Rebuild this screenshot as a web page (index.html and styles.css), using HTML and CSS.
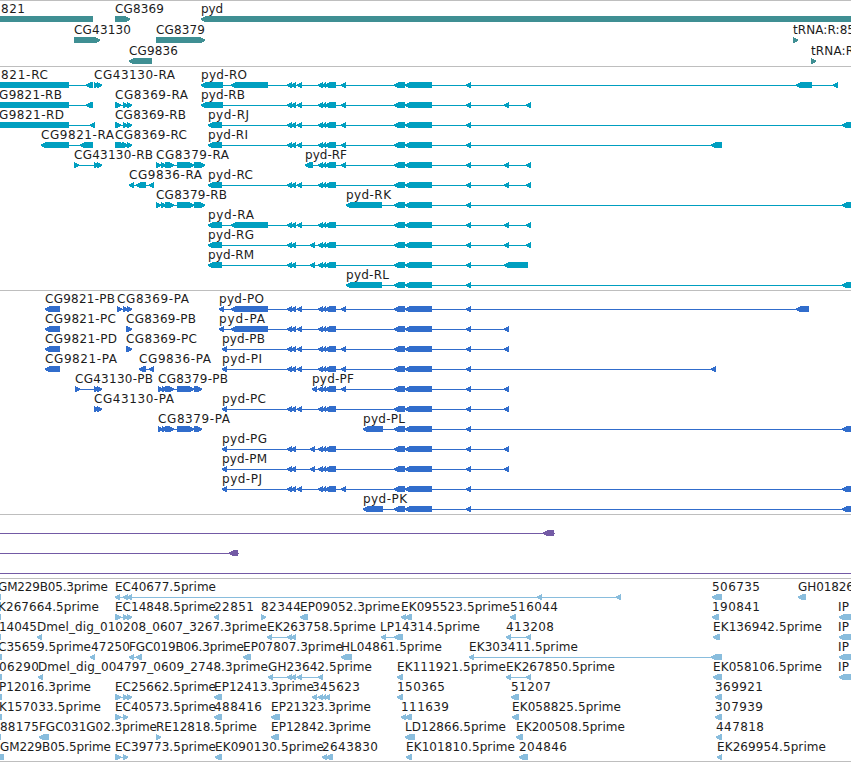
FILE: index.html
```html
<!DOCTYPE html>
<html lang="en">
<head>
<meta charset="utf-8">
<title>Genome browser</title>
<link rel="stylesheet" href="styles.css">
</head>
<body>
<main class="browser" id="browser"></main>
<script src="tracks.js"></script>
</body>
</html>
```
FILE: styles.css
```css
body {
  margin: 0;
  background: #fff;
}

.browser {
  display: flex;
  flex-direction: column;
  width: 851px;
  height: 762px;
  overflow: hidden;
  border-bottom: 1px solid #bebebe;
  box-sizing: border-box;
}

.track {
  display: flex;
  flex-direction: column;
  flex: none;
  box-sizing: border-box;
  border-top: 1px solid #bebebe;
}

.gene { height: 66px; color: #3f8f93; }
.transcript { height: 224px; color: #009fc0; }
.protein { height: 224px; color: #316dcc; }
.insertion { height: 64px; color: #735aa5; }
.est { height: 183px; color: #89bddd; }

.row {
  display: block;
  flex: none;
  width: 851px;
  height: 20px;
  overflow: visible;
}

.gene .row { height: 21px; }

.row path,
.row rect {
  fill: currentColor;
  shape-rendering: crispEdges;
}

.row text {
  fill: #1c1c1c;
  font-family: "DejaVu Sans", sans-serif;
  font-size: 12px;
}
```
FILE: tracks.js
```js
// Label: [text, first pixel, last pixel].
// Feature: [direction, [start, end], ...], blocks are joined by a thin line.
const L = '<', R = '>';
const mid = [[287, 292], [291, 296]];
const c3 = [297, 302], alt = [310, 315];
const cluster = [[318, 323], [322, 326], [325, 336]];
const e = [341, 346];
const core = [[394, 405], [405, 432], [466, 471]];
const h = [504, 509], i = [526, 531], edge = [842, 870];
const big = [231, 268];
const pyd = (start, extra, tail) => [L, ...start, ...mid, ...extra, ...cluster, ...tail];
const r8379 = [R, [156, 161], [161, 166], [165, 174], [177, 194], [194, 205]];
const p8379 = [R, [158, 163], [162, 167], [165, 174], [177, 194], [194, 202]];
const r8369 = [R, [115, 121], [123, 128], [127, 132]];
const pair = [[94, 99], [97, 102]];

const tracks = [
  { name: 'gene', rows: [
    { t: [['821', 1, 25], ['CG8369', 115, 164], ['pyd', 201, 223]],
      f: [['=', [-5, 93]], [R, [115, 130]], [L, [201, 870]]] },
    { t: [['CG43130', 74, 131], ['CG8379', 156, 205], ['tRNA:R:85', 793, 855]],
      f: [[R, [74, 100]], [R, [156, 205]], [R, [793, 798]]] },
    { t: [['CG9836', 129, 178], ['tRNA:R', 811, 854]],
      f: [[L, [129, 152]], [R, [811, 816]]] }
  ] },
  { name: 'transcript', rows: [
    { t: [['821-RC', 1, 48], ['CG43130-RA', 94, 175], ['pyd-RO', 201, 247]],
      f: [['=', [-5, 69]], [L, [68, 69], [86, 93]], [R, ...pair],
        pyd([[201, 223], big], [c3], [e, ...core, [796, 812], [833, 838]])] },
    { t: [['G9821-RB', -1, 62], ['CG8369-RA', 115, 188], ['pyd-RB', 201, 245]],
      f: [['=', [-5, 69]], [L, [68, 69], [86, 93]], r8369, pyd([[201, 223]], [c3], [e, ...core, h, i])] },
    { t: [['G9821-RD', -1, 64], ['CG8369-RB', 115, 186], ['pyd-RJ', 208, 249]],
      f: [['=', [-5, 69]], [L, [68, 69], [90, 95]], r8369, pyd([[208, 222]], [c3], [e, ...core, edge])] },
    { t: [['CG9821-RA', 41, 114], ['CG8369-RC', 115, 187], ['pyd-RI', 208, 248]],
      f: [[L, [41, 69], [80, 93]], [R, [115, 125], [122, 128], [127, 132]],
        pyd([[208, 222]], [c3], [e, ...core, [711, 722]])] },
    { t: [['CG43130-RB', 74, 153], ['CG8379-RA', 156, 229], ['pyd-RF', 305, 347]],
      f: [[R, [74, 79], ...pair], r8379, [L, [305, 313], ...cluster, e, ...core, h, i]] },
    { t: [['CG9836-RA', 129, 202], ['pyd-RC', 208, 253]],
      f: [[L, [129, 134], [136, 146], [149, 154]], pyd([[208, 222]], [c3], [...core, h, i])] },
    { t: [['CG8379-RB', 156, 227], ['pyd-RK', 346, 391]],
      f: [r8379, [L, [346, 382], ...core, edge]] },
    { t: [['pyd-RA', 208, 254]], f: [pyd([[208, 222], big], [c3], [...core, h, i])] },
    { t: [['pyd-RG', 208, 254]], f: [pyd([[208, 222]], [alt], [...core, h, i])] },
    { t: [['pyd-RM', 208, 254]], f: [pyd([[208, 222]], [alt], [...core, [504, 528]])] },
    { t: [['pyd-RL', 346, 389]], f: [[L, [346, 382], ...core, edge]] }
  ] },
  { name: 'protein', rows: [
    { t: [['CG9821-PB', 45, 115], ['CG8369-PA', 117, 189], ['pyd-PO', 219, 264]],
      f: [[L, [45, 60]], [R, [117, 122], [123, 128], [127, 132]],
        pyd([[219, 224], big], [c3], [e, ...core, [796, 809]])] },
    { t: [['CG9821-PC', 45, 116], ['CG8369-PB', 126, 196], ['pyd-PA', 219, 265]],
      f: [[L, [45, 60]], [R, [126, 132]], pyd([[219, 224], big], [c3], [...core, h])] },
    { t: [['CG9821-PD', 45, 117], ['CG8369-PC', 126, 197], ['pyd-PB', 222, 265]],
      f: [[L, [45, 60]], [R, [126, 132]], pyd([[222, 227]], [c3], [e, ...core, h])] },
    { t: [['CG9821-PA', 45, 117], ['CG9836-PA', 139, 211], ['pyd-PI', 222, 262]],
      f: [[L, [45, 60]], [L, [139, 146], [149, 154]], pyd([[222, 227]], [c3], [e, ...core, [711, 716]])] },
    { t: [['CG43130-PB', 75, 153], ['CG8379-PB', 158, 228], ['pyd-PF', 312, 354]],
      f: [[R, [75, 80], ...pair], p8379, [L, [312, 317], ...cluster, e, ...core, h]] },
    { t: [['CG43130-PA', 94, 174], ['pyd-PC', 222, 266]],
      f: [[R, ...pair], pyd([[222, 227]], [c3], [...core, h])] },
    { t: [['CG8379-PA', 158, 230], ['pyd-PL', 363, 405]],
      f: [p8379, [L, [363, 383], ...core, edge]] },
    { t: [['pyd-PG', 222, 267]], f: [pyd([[222, 227]], [alt], [...core, h])] },
    { t: [['pyd-PM', 222, 267]], f: [pyd([[222, 227]], [alt], [...core, h])] },
    { t: [['pyd-PJ', 222, 262]], f: [pyd([[222, 227]], [c3], [e, ...core, edge])] },
    { t: [['pyd-PK', 363, 407]], f: [[L, [363, 383], ...core, edge]] }
  ] },
  { name: 'insertion', rows: [
    { t: [], f: [['-', [-5, 555]], [L, [543, 554]]] },
    { t: [], f: [['-', [-5, 239]], [L, [229, 238]]] },
    { t: [], f: [['-', [-5, 860]]] }
  ] },
  { name: 'est', rows: [
    { t: [['GM229B05.3prime', -2, 108], ['EC40677.5prime', 115, 216], ['506735', 712, 760], ['GH01826', 798, 854]],
      f: [['=', [-5, 1]], [L, [115, 120], [123, 128], [127, 132], [537, 542], [616, 621]],
        [L, [712, 722]], [L, [798, 806]]] },
    { t: [['K267664.5prime', -2, 99], ['EC14848.5prime', 115, 216], ['22851', 214, 254], ['82344', 261, 301],
        ['EP09052.3prime', 300, 400], ['EK095523.5prime', 401, 510], ['516044', 510, 558], ['190841', 712, 760], ['IP', 838, 849]],
      f: [['=', [-5, 1]], r8369, [L, [214, 219]], [R, [261, 266]], [L, [300, 308]],
        [L, [401, 406], [405, 412]], [L, [510, 516]], [L, [712, 719]], [L, [839, 870]]] },
    { t: [['14045', -1, 37], ['Dmel_dig_010208_0607_3267.3prime', 37, 267], ['EK263758.5prime', 267, 376],
        ['LP14314.5prime', 380, 480], ['413208', 506, 554], ['EK136942.5prime', 713, 822], ['IP', 838, 849]],
      f: [['=', [-5, 1]], [L, [37, 42]], [L, [267, 272], [287, 292], [291, 296]], [L, [381, 386], [394, 403]],
        [L, [506, 511], [526, 531]], [L, [713, 720]], [L, [839, 870]]] },
    { t: [['C35659.5prime', -2, 91], ['47250', 91, 130], ['FGC019B06.3prime', 129, 244], ['EP07807.3prime', 243, 343],
        ['HL04861.5prime', 341, 442], ['EK303411.5prime', 469, 578], ['IP', 838, 849]],
      f: [['=', [-5, 2]], [L, [90, 95]], [L, [129, 134], [136, 142]], [L, [243, 251]], [L, [341, 352]],
        [L, [469, 474], [711, 722]], [L, [839, 870]]] },
    { t: [['06290', -1, 39], ['Dmel_dig_004797_0609_2748.3prime', 38, 268], ['GH23642.5prime', 268, 372],
        ['EK111921.5prime', 397, 506], ['EK267850.5prime', 506, 615], ['EK058106.5prime', 713, 822], ['IP', 838, 849]],
      f: [['=', [-5, 2]], [L, [38, 43]], [L, [268, 273], [287, 292], [291, 296], [297, 302], [318, 323]],
        [L, [397, 403]], [L, [506, 511], [526, 531]], [L, [713, 722]], [L, [839, 870]]] },
    { t: [['P12016.3prime', -1, 91], ['EC25662.5prime', 115, 216], ['EP12413.3prime', 214, 314], ['345623', 312, 360],
        ['150365', 397, 445], ['51207', 511, 551], ['369921', 715, 763]],
      f: [['=', [-5, 2]], r8369, [L, [214, 222]], [L, [312, 317], [318, 323], [322, 326], [325, 330]],
        [L, [397, 403]], [L, [511, 519]], [L, [715, 722]]] },
    { t: [['K157033.5prime', -1, 101], ['EC40573.5prime', 115, 216], ['488416', 214, 262], ['EP21323.3prime', 271, 371],
        ['111639', 401, 449], ['EK058825.5prime', 512, 621], ['307939', 715, 763]],
      f: [['=', [-5, 2]], [R, [115, 121], [123, 128]], [L, [214, 222]], [L, [271, 280]],
        [L, [401, 406], [405, 412]], [L, [512, 519]], [L, [715, 722]]] },
    { t: [['88175', 0, 39], ['FGC031G02.3prime', 39, 157], ['RE12818.5prime', 156, 257], ['EP12842.3prime', 271, 371],
        ['LD12866.5prime', 405, 506], ['EK200508.5prime', 516, 625], ['447818', 716, 764]],
      f: [['=', [-5, 1]], [L, [39, 49]], [R, [156, 161]], [L, [271, 279]], [L, [405, 415]],
        [L, [516, 523]], [L, [716, 722]]] },
    { t: [['GM229B05.5prime', 0, 111], ['EC39773.5prime', 115, 216], ['EK090130.5prime', 215, 324], ['2643830', 322, 378],
        ['EK101810.5prime', 406, 515], ['204846', 519, 567], ['EK269954.5prime', 717, 826]],
      f: [['=', [-5, 4]], [R, [115, 121], [123, 128]], [L, [215, 222]], [L, [322, 327], [326, 333]],
        [L, [406, 412]], [L, [519, 528]], [L, [717, 722]]] }
  ] }
];

const TOP = 15, BOTTOM = 21, LINE = 18, BASELINE = 12;

// Arrowheads are stepped one pixel row at a time, mirrored for the forward strand.
const STEPS = [4, 2, 0, 0, 1, 3];

function block(dir, a, b) {
  if (dir === '=') {
    return `<rect x="${a}" y="${TOP}" width="${b - a}" height="${BOTTOM - TOP}"/>`;
  }
  const room = b - a - 1;
  let d = dir === L ? `M${b} ${TOP}` : `M${a} ${TOP}`;
  STEPS.forEach((step, n) => {
    const inset = Math.min(step, room);
    d += `H${dir === L ? a + inset : b - inset}V${TOP + n + 1}`;
  });
  return `<path d="${d}H${dir === L ? b : a}Z"/>`;
}

function feature([dir, ...blocks]) {
  const a = blocks[0][0], b = blocks[blocks.length - 1][1];
  let out = '';
  if (dir === '-' || blocks.length > 1) {
    out += `<rect x="${a}" y="${LINE}" width="${b - a}" height="1"/>`;
  }
  return dir === '-' ? out : out + blocks.map(([s, t]) => block(dir, s, t)).join('');
}

const label = ([text, a, b]) =>
  `<text x="${a}" y="${BASELINE}" textLength="${b - a}">${text}</text>`;

document.getElementById('browser').innerHTML = tracks.map(track =>
  `<section class="track ${track.name}">` +
  track.rows.map(row => `<svg class="row">${row.f.map(feature).join('')}${row.t.map(label).join('')}</svg>`).join('') +
  '</section>').join('');
```
